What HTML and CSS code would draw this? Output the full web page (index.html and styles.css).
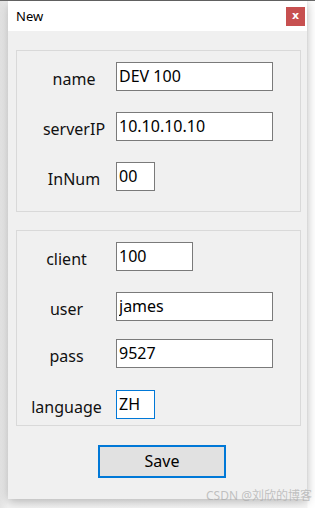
FILE: index.html
```html
<!DOCTYPE html>
<html>
<head>
<meta charset="utf-8">
<link rel="stylesheet" href="styles.css">
</head>
<body>
<div class="screen">
  <div class="window">
    <div class="titlebar">
      <span class="title">New</span>
      <span class="close">x</span>
    </div>
    <div class="content">
      <div class="group group-top">
        <div class="row"><span class="label">name</span><input class="field wide" type="text" value="DEV 100"></div>
        <div class="row"><span class="label">serverIP</span><input class="field wide" type="text" value="10.10.10.10"></div>
        <div class="row"><span class="label">InNum</span><input class="field short" type="text" value="00"></div>
      </div>
      <div class="group group-bottom">
        <div class="row"><span class="label">client</span><input class="field mid" type="text" value="100"></div>
        <div class="row r-user"><span class="label">user</span><input class="field wide" type="text" value="james"></div>
        <div class="row r-pass"><span class="label">pass</span><input class="field wide" type="text" value="9527"></div>
        <div class="row r-lang"><span class="label">language</span><input class="field short focus" type="text" value="ZH"></div>
      </div>
      <div class="actions">
        <button class="save" type="button">Save</button>
      </div>
    </div>
  </div>
  <div class="watermark">CSDN @刘欣的博客</div>
</div>
</body>
</html>
```
FILE: styles.css
```css
* { box-sizing: border-box; }
html, body { margin: 0; padding: 0; }
body {
  width: 315px;
  height: 508px;
  overflow: hidden;
  background: #f4f4f4;
  font-family: "Noto Sans", "Noto Sans CJK SC", sans-serif;
  color: #000;
}
.screen {
  position: relative;
  width: 315px;
  height: 508px;
  border-top: 1px solid #6a6a6a;
  background: linear-gradient(to right, #e4e4e4 0, #f2f2f2 8px, #f6f6f6 307px, #ffffff 308px);
}
.window {
  margin-left: 8px;
  width: 299px;
  height: 498px;
  background: #f0f0f0;
  box-shadow: 0 2px 10px rgba(0, 0, 0, 0.28);
  display: flex;
  flex-direction: column;
}
.titlebar {
  height: 30px;
  background: #ffffff;
  display: flex;
  align-items: center;
  justify-content: space-between;
  padding-left: 8px;
  padding-right: 2px;
}
.title {
  font-size: 13px;
  color: #000;
  margin-top: 0px;
}
.close {
  width: 19px;
  height: 19px;
  background: #c75050;
  color: #fff;
  font-size: 11px;
  font-weight: bold;
  font-family: "DejaVu Sans", sans-serif;
  display: flex;
  align-items: center;
  justify-content: center;
  line-height: 1;
  padding-bottom: 2px;
}
.content {
  padding: 19px 6px 0 8px;
  display: flex;
  flex-direction: column;
}
.group {
  border: 1px solid #d9d9d9;
  display: flex;
  flex-direction: column;
  padding-top: 11px;
}
.group-top {
  height: 162px;
  gap: 21px;
}
.group-bottom {
  margin-top: 18px;
  height: 196px;
}
.group-top .label { padding-left: 15px; }
.r-user { margin-top: 21px; }
.r-pass { margin-top: 18px; }
.r-lang { margin-top: 22px; }
.row {
  display: flex;
  align-items: center;
  height: 29px;
}
.label {
  width: 99px;
  text-align: center;
  font-size: 16px;
  padding-top: 4px;
  color: #111;
}
.field {
  height: 29px;
  border: 1px solid #7a7a7a;
  background: #fff;
  font-family: "Noto Sans", sans-serif;
  font-size: 16px;
  color: #000;
  padding: 0 0 1px 2px;
  margin: 0;
  outline: none;
}
.wide { width: 157px; }
.mid { width: 77px; }
.short { width: 39px; }
.focus { border-color: #0078d7; }
.actions {
  padding-left: 82px;
  margin-top: 19px;
}
.save {
  width: 128px;
  height: 33px;
  border: 2px solid #0078d7;
  background: #e1e1e1;
  font-family: "Noto Sans", sans-serif;
  font-size: 16px;
  color: #000;
  padding: 0 0 1px 0;
  margin: 0;
}
.watermark {
  position: absolute;
  right: 3px;
  top: 485px;
  font-size: 12px;
  color: rgba(170, 170, 170, 0.7);
  font-family: "Noto Sans", "Noto Sans CJK SC", sans-serif;
  white-space: nowrap;
}
```
